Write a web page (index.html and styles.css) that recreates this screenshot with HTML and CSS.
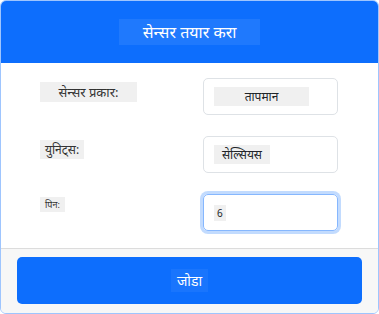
FILE: index.html
```html
<!DOCTYPE html>
<html lang="mr">
    <head>
        <meta charset="UTF-8">
        <meta name="viewport" content="width=device-width, initial-scale=1.0">
        <title>सेन्सर तयार करा</title>
        <link rel="stylesheet" href="styles.css">
    </head>

    <body>
        <div class="card">
            <div class="card-header">
                <h1 class="title">सेन्सर तयार करा</h1>
            </div>

            <div class="card-body">
                <div class="form-row">
                    <label class="label wide">सेन्सर प्रकार:</label>
                    <div class="field"><span class="value wide">तापमान</span></div>
                </div>
                <div class="form-row">
                    <label class="label">युनिट्स:</label>
                    <div class="field"><span class="value">सेल्सियस</span></div>
                </div>
                <div class="form-row">
                    <label class="label small">पिन:</label>
                    <div class="field focus"><span class="value num">6</span></div>
                </div>
            </div>

            <div class="card-footer">
                <button class="add-button" type="button"><span>जोडा</span></button>
            </div>
        </div>
    </body>
</html>
```

FILE: styles.css
```css
* {
    box-sizing: border-box;
}

body {
    margin: 0;
    font-family: "Noto Sans", "DejaVu Sans", sans-serif;
    color: #212529;
}

.card {
    width: 379px;
    height: 314px;
    display: flex;
    flex-direction: column;
    border: 1px solid #9ec5fe;
    border-radius: 6px;
    overflow: hidden;
    background: #fff;
}

.card-header {
    height: 62px;
    display: flex;
    justify-content: center;
    align-items: center;
    background-color: #0d6efd;
}

.title {
    margin: 0;
    padding: 2px 24px;
    font-size: 16px;
    font-weight: normal;
    color: #fff;
    background-color: rgba(255, 255, 255, 0.08);
}

.card-body {
    flex: 1;
    display: flex;
    flex-direction: column;
    gap: 21px;
    padding: 15px 40px 0 39px;
}

.form-row {
    display: flex;
    justify-content: space-between;
    align-items: flex-start;
}

.label {
    margin-top: 4px;
    padding: 1px 5px;
    font-size: 12px;
    color: #333;
    background-color: #f0f0f0;
}

.label.wide {
    width: 97px;
    text-align: center;
    font-size: 13px;
}

.label.small {
    font-size: 9px;
    margin-top: 3px;
}

.field {
    width: 135px;
    height: 37px;
    display: flex;
    align-items: center;
    padding-left: 10px;
    border: 1px solid #dee2e6;
    border-radius: 5px;
}

.field.focus {
    border-color: #86b7fe;
    box-shadow: 0 0 0 3px rgba(13, 110, 253, 0.25);
}

.value {
    padding: 1px 8px;
    font-size: 12px;
    background-color: #f0f0f0;
}

.value.wide {
    width: 95px;
    text-align: center;
}

.value.num {
    padding: 1px 3px;
    font-size: 10px;
}

.card-footer {
    height: 65px;
    padding: 8px 16px;
    border-top: 1px solid #dcdcdc;
    background-color: #f7f7f7;
}

.add-button {
    width: 100%;
    height: 47px;
    border: none;
    border-radius: 5px;
    background-color: #0d6efd;
    font-family: inherit;
    cursor: pointer;
}

.add-button span {
    padding: 2px 6px;
    font-size: 14px;
    color: #fff;
    background-color: rgba(255, 255, 255, 0.05);
}
```
